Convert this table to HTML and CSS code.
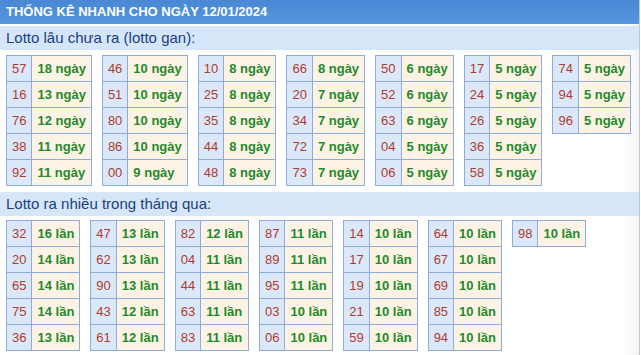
FILE: index.html
```html
<!DOCTYPE html>
<html lang="vi">
<head>
<meta charset="utf-8">
<title>Thống kê nhanh</title>
<link rel="stylesheet" href="styles.css">
</head>
<body>
<div class="box">
  <div class="head">THỐNG KÊ NHANH CHO NGÀY 12/01/2024</div>

  <div class="band">Lotto lâu chưa ra (lotto gan):</div>
  <div class="grid">
    <table class="t"><tr><td class="n">57</td><td class="v">18 ngày</td></tr><tr><td class="n">16</td><td class="v">13 ngày</td></tr><tr><td class="n">76</td><td class="v">12 ngày</td></tr><tr><td class="n">38</td><td class="v">11 ngày</td></tr><tr><td class="n">92</td><td class="v">11 ngày</td></tr></table>
    <table class="t"><tr><td class="n">46</td><td class="v">10 ngày</td></tr><tr><td class="n">51</td><td class="v">10 ngày</td></tr><tr><td class="n">80</td><td class="v">10 ngày</td></tr><tr><td class="n">86</td><td class="v">10 ngày</td></tr><tr><td class="n">00</td><td class="v">9 ngày</td></tr></table>
    <table class="t"><tr><td class="n">10</td><td class="v">8 ngày</td></tr><tr><td class="n">25</td><td class="v">8 ngày</td></tr><tr><td class="n">35</td><td class="v">8 ngày</td></tr><tr><td class="n">44</td><td class="v">8 ngày</td></tr><tr><td class="n">48</td><td class="v">8 ngày</td></tr></table>
    <table class="t"><tr><td class="n">66</td><td class="v">8 ngày</td></tr><tr><td class="n">20</td><td class="v">7 ngày</td></tr><tr><td class="n">34</td><td class="v">7 ngày</td></tr><tr><td class="n">72</td><td class="v">7 ngày</td></tr><tr><td class="n">73</td><td class="v">7 ngày</td></tr></table>
    <table class="t"><tr><td class="n">50</td><td class="v">6 ngày</td></tr><tr><td class="n">52</td><td class="v">6 ngày</td></tr><tr><td class="n">63</td><td class="v">6 ngày</td></tr><tr><td class="n">04</td><td class="v">5 ngày</td></tr><tr><td class="n">06</td><td class="v">5 ngày</td></tr></table>
    <table class="t"><tr><td class="n">17</td><td class="v">5 ngày</td></tr><tr><td class="n">24</td><td class="v">5 ngày</td></tr><tr><td class="n">26</td><td class="v">5 ngày</td></tr><tr><td class="n">36</td><td class="v">5 ngày</td></tr><tr><td class="n">58</td><td class="v">5 ngày</td></tr></table>
    <table class="t"><tr><td class="n">74</td><td class="v">5 ngày</td></tr><tr><td class="n">94</td><td class="v">5 ngày</td></tr><tr><td class="n">96</td><td class="v">5 ngày</td></tr></table>
  </div>

  <div class="band">Lotto ra nhiều trong tháng qua:</div>
  <div class="grid grid2">
    <table class="t"><tr><td class="n">32</td><td class="v">16 lần</td></tr><tr><td class="n">20</td><td class="v">14 lần</td></tr><tr><td class="n">65</td><td class="v">14 lần</td></tr><tr><td class="n">75</td><td class="v">14 lần</td></tr><tr><td class="n">36</td><td class="v">13 lần</td></tr></table>
    <table class="t"><tr><td class="n">47</td><td class="v">13 lần</td></tr><tr><td class="n">62</td><td class="v">13 lần</td></tr><tr><td class="n">90</td><td class="v">13 lần</td></tr><tr><td class="n">43</td><td class="v">12 lần</td></tr><tr><td class="n">61</td><td class="v">12 lần</td></tr></table>
    <table class="t"><tr><td class="n">82</td><td class="v">12 lần</td></tr><tr><td class="n">04</td><td class="v">11 lần</td></tr><tr><td class="n">44</td><td class="v">11 lần</td></tr><tr><td class="n">63</td><td class="v">11 lần</td></tr><tr><td class="n">83</td><td class="v">11 lần</td></tr></table>
    <table class="t"><tr><td class="n">87</td><td class="v">11 lần</td></tr><tr><td class="n">89</td><td class="v">11 lần</td></tr><tr><td class="n">95</td><td class="v">11 lần</td></tr><tr><td class="n">03</td><td class="v">10 lần</td></tr><tr><td class="n">06</td><td class="v">10 lần</td></tr></table>
    <table class="t"><tr><td class="n">14</td><td class="v">10 lần</td></tr><tr><td class="n">17</td><td class="v">10 lần</td></tr><tr><td class="n">19</td><td class="v">10 lần</td></tr><tr><td class="n">21</td><td class="v">10 lần</td></tr><tr><td class="n">59</td><td class="v">10 lần</td></tr></table>
    <table class="t"><tr><td class="n">64</td><td class="v">10 lần</td></tr><tr><td class="n">67</td><td class="v">10 lần</td></tr><tr><td class="n">69</td><td class="v">10 lần</td></tr><tr><td class="n">85</td><td class="v">10 lần</td></tr><tr><td class="n">94</td><td class="v">10 lần</td></tr></table>
    <table class="t"><tr><td class="n">98</td><td class="v">10 lần</td></tr></table>
  </div>
</div>
</body>
</html>
```

FILE: styles.css
```css
html, body {
  margin: 0;
  padding: 0;
  background: #ffffff;
}
body {
  font-family: "Liberation Sans", Arial, sans-serif;
}
.box {
  width: 639px;
  height: 355px;
  border-right: 1px solid #c4c8cc;
  background: linear-gradient(to right, #ffffff 0, #ffffff 622px, #f1f3f5 639px);
}
.head {
  height: 24px;
  line-height: 24px;
  padding-left: 6px;
  background: linear-gradient(#4888d4, #5596de);
  color: #ffffff;
  font-weight: bold;
  font-size: 13px;
}
.band {
  margin-top: 2px;
  height: 24px;
  line-height: 24px;
  padding-left: 6px;
  background: #d5e6f8;
  color: #1a4080;
  font-size: 15px;
}
.grid {
  display: flex;
  align-items: flex-start;
  gap: 10px;
  padding: 5px 0 4px 6px;
}
.grid2 {
  padding-top: 4px;
}
.t {
  border-collapse: collapse;
  border: 1px solid #8eaddd;
}
.t td {
  border: 1px solid #8eaddd;
  height: 26px;
  padding: 0 5px;
  font-size: 13px;
  white-space: nowrap;
  box-sizing: border-box;
}
.n {
  background: #dbe8fa;
  color: #b03c2c;
  font-size: 14px;
  text-align: center;
}
.v {
  background: #fdf3e4;
  color: #1f8a2d;
  font-weight: bold;
  text-align: left;
}
```
